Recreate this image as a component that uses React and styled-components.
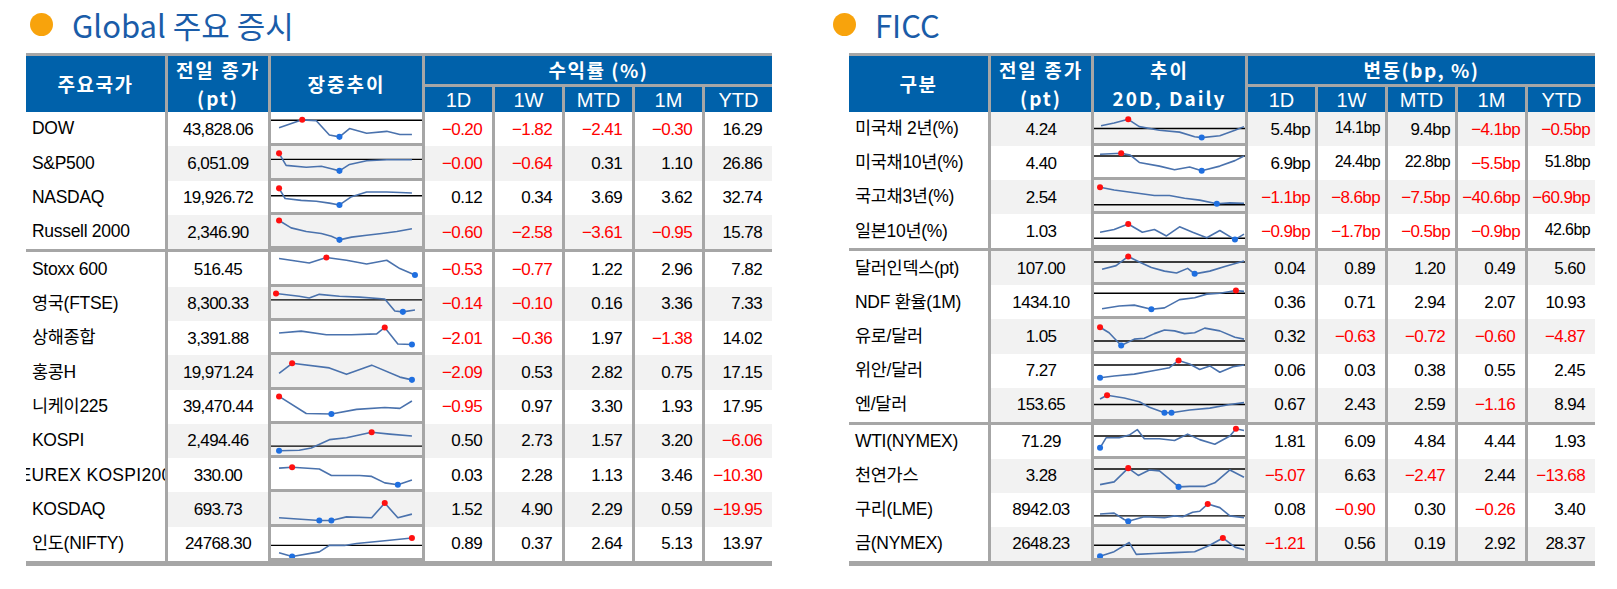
import styled, { createGlobalStyle } from 'styled-components';

const GRID = '139px 100px 151px repeat(5, 67px)';
const LINE = '#a6a6a6';
const HEAD = '#0061aa';
const STRIPE = '#f2f2f2';

const equities = [
  [
    { name: 'DOW', close: '43,828.06', base: 9, pts: [[8,17],[31,8.5],[45,9.5],[58,25],[68,27],[78,18],[95,23],[115,21],[128,24.5],[140,24.5]], ret: ['−0.20', '−1.82', '−2.41', '−0.30', '16.29'] },
    { name: 'S&P500', close: '6,051.09', base: 14.5, pts: [[8,8],[15,21],[35,23],[50,22],[61,25],[68,27],[78,20],[95,16],[115,15],[140,15]], ret: ['−0.00', '−0.64', '0.31', '1.10', '26.86'] },
    { name: 'NASDAQ', close: '19,926.72', base: 16, pts: [[8,8],[14,19],[30,21],[45,22],[58,24],[68,26],[80,17],[95,12],[115,12],[128,12.5],[140,13]], ret: ['0.12', '0.34', '3.69', '3.62', '32.74'] },
    { name: 'Russell 2000', close: '2,346.90', pts: [[8,6],[20,14],[35,18],[50,20],[60,23],[68,27],[80,24],[95,22],[110,20],[125,18],[140,15]], ret: ['−0.60', '−2.58', '−3.61', '−0.95', '15.78'] },
  ],
  [
    { name: 'Stoxx 600', close: '516.45', pts: [[8,7],[38,12],[55,6],[75,9],[95,13],[115,9],[128,18],[143,25]], ret: ['−0.53', '−0.77', '1.22', '2.96', '7.82'] },
    { name: '영국(FTSE)', close: '8,300.33', base: 14, pts: [[5,7],[28,10],[38,12],[48,8],[68,10],[88,11],[113,13],[123,26],[131,27],[143,25]], ret: ['−0.14', '−0.10', '0.16', '3.36', '7.33'] },
    { name: '상해종합', close: '3,391.88', pts: [[8,13],[30,11],[55,15],[80,15],[105,14],[113,7],[126,25],[140,25.5]], ret: ['−2.01', '−0.36', '1.97', '−1.38', '14.02'] },
    { name: '홍콩H', close: '19,971.24', pts: [[8,20],[21,9],[58,14],[75,21],[100,11],[128,24],[140,27]], ret: ['−2.09', '0.53', '2.82', '0.75', '17.15'] },
    { name: '니케이225', close: '39,470.44', pts: [[8,7],[35,25.5],[60,26],[85,21],[113,19],[128,20],[140,12]], ret: ['−0.95', '0.97', '3.30', '1.93', '17.95'] },
    { name: 'KOSPI', close: '2,494.46', base: 24, pts: [[8,29],[28,28.5],[40,26],[58,17],[75,15],[100,9],[118,11],[140,13]], ret: ['0.50', '2.73', '1.57', '3.20', '−6.06'] },
    { name: 'EUREX KOSPI200', clip: true, close: '330.00', pts: [[8,11],[21,10],[48,12],[60,19],[88,19],[100,20],[113,27],[126,29],[140,24]], ret: ['0.03', '2.28', '1.13', '3.46', '−10.30'] },
    { name: 'KOSDAQ', close: '693.73', pts: [[8,28],[48,31],[60,31],[75,27],[100,28],[113,12],[126,28],[140,24]], ret: ['1.52', '4.90', '2.29', '0.59', '−19.95'] },
    { name: '인도(NIFTY)', close: '24768.30', base: 20, pts: [[8,28],[21,32],[48,27],[58,20],[73,20],[85,18],[113,15],[140,12]], ret: ['0.89', '0.37', '2.64', '5.13', '13.97'] },
  ],
];

const ficc = [
  [
    { name: '미국채 2년(%)', close: '4.24', bp: true, base: 18, pts: [[7,15],[20,12],[34,8],[45,16],[65,20],[85,22],[100,27],[107,28],[125,26],[140,20],[149,16]], ret: ['5.4bp', '~14.1bp', '9.4bp', '−4.1bp', '−0.5bp'] },
    { name: '미국채10년(%)', close: '4.40', bp: true, base: 11, pts: [[6,9],[27,8],[36,10],[45,18],[65,22],[80,26],[95,23],[107,27],[125,22],[140,16],[149,11]], ret: ['6.9bp', '~24.4bp', '~22.8bp', '−5.5bp', '~51.8bp'] },
    { name: '국고채3년(%)', close: '2.54', bp: true, base: 27, pts: [[6,8],[20,11],[40,14],[60,17],[75,17],[90,20],[105,22],[122,26],[135,25],[149,25.5]], ret: ['−1.1bp', '−8.6bp', '−7.5bp', '−40.6bp', '−60.9bp'] },
    { name: '일본10년(%)', close: '1.03', bp: true, base: 26.5, pts: [[6,20],[20,17],[34,11],[48,20],[60,17],[72,24],[85,14],[98,20],[112,26],[125,18],[140,28],[149,22]], ret: ['−0.9bp', '−1.7bp', '−0.5bp', '−0.9bp', '~42.6bp'] },
  ],
  [
    { name: '달러인덱스(pt)', close: '107.00', base: 12, pts: [[8,20],[22,16],[34,6],[45,12],[57,18],[70,22],[82,24],[93,19],[100,25],[115,22],[130,17],[149,11]], ret: ['0.04', '0.89', '1.20', '0.49', '5.60'] },
    { name: 'NDF 환율(1M)', close: '1434.10', base: 9, pts: [[8,26],[25,23],[40,22],[57,26.5],[70,25],[85,16],[100,14],[112,10],[125,9],[141,6],[149,7]], ret: ['0.36', '0.71', '2.94', '2.07', '10.93'] },
    { name: '유로/달러', close: '1.05', base: 24, pts: [[6,9],[15,15],[27,29],[40,22],[50,21],[60,16],[70,12],[80,13],[90,16],[100,15],[110,10],[125,13],[140,20],[149,22]], ret: ['0.32', '−0.63', '−0.72', '−0.60', '−4.87'] },
    { name: '위안/달러', close: '7.27', base: 12, pts: [[6,26],[20,24],[40,22],[60,18],[75,15],[84,7],[95,11],[105,17],[115,13],[125,20],[138,14],[149,12]], ret: ['0.06', '0.03', '0.38', '0.55', '2.45'] },
    { name: '엔/달러', close: '153.65', base: 18, pts: [[6,12],[13,8],[30,11],[45,15],[55,21],[70,27],[77,27],[95,24],[115,22],[135,18],[149,16]], ret: ['0.67', '2.43', '2.59', '−1.16', '8.94'] },
  ],
  [
    { name: 'WTI(NYMEX)', close: '71.29', base: 12, pts: [[6,25],[12,14],[25,14],[35,11],[43,5],[50,15],[65,15],[80,17],[93,10],[105,16],[120,21],[135,12],[141,4],[149,6]], ret: ['1.81', '6.09', '4.84', '4.44', '1.93'] },
    { name: '천연가스', close: '3.28', base: 11, pts: [[6,28],[20,25],[34,10],[44,18],[55,12],[65,13],[75,22],[84,30.5],[95,30],[110,30],[120,26],[135,12],[149,20]], ret: ['−5.07', '6.63', '−2.47', '2.44', '−13.68'] },
    { name: '구리(LME)', close: '8942.03', base: 25, pts: [[6,23],[20,22],[30,29],[34,31],[50,26],[70,27],[80,25],[88,26],[98,21],[105,20],[113,12],[125,16],[135,25],[149,27]], ret: ['0.08', '−0.90', '0.30', '−0.26', '3.40'] },
    { name: '금(NYMEX)', close: '2648.23', base: 20, pts: [[6,32],[20,27],[35,17],[42,30],[60,29],[80,28],[100,27],[115,20],[128,12],[140,22],[149,25]], ret: ['−1.21', '0.56', '0.19', '2.92', '28.37'] },
  ],
];

const GlobalStyle = createGlobalStyle`
  body {
    margin: 0;
    background: #fff;
  }
`;

const Page = styled.div`
  display: flex;
  gap: 77px;
  padding-left: 26px;
  font-family: "Liberation Sans", "Noto Sans CJK KR", sans-serif;
  color: #000;
`;

const Panel = styled.section`
  width: 746px;
  display: flex;
  flex-direction: column;
`;

const Title = styled.h2`
  margin: 0 0 5px ${(p) => p.$indent}px;
  height: 48px;
  display: flex;
  align-items: center;
  gap: 19px;
  font-family: "Noto Sans CJK KR", sans-serif;
  font-weight: 400;
  font-size: 31px;
  line-height: 1;
  color: #1a5ca8;

  &::before {
    content: '';
    width: 23px;
    height: 23px;
    border-radius: 50%;
    background: #f8a30c;
  }
`;

const Table = styled.div`
  border-top: 3px solid ${LINE};
  border-bottom: 5px solid ${LINE};
`;

const Head = styled.div`
  display: grid;
  grid-template-columns: ${GRID};
  grid-template-rows: 28px 25px;
  gap: 3px;
  background: ${LINE};
`;

const HeadCell = styled.div`
  grid-row: ${(p) => (p.$rows ? `span ${p.$rows}` : 'auto')};
  grid-column: ${(p) => (p.$cols ? `span ${p.$cols}` : 'auto')};
  background: ${HEAD};
  color: #fff;
  display: flex;
  flex-direction: column;
  align-items: center;
  justify-content: center;
  font-family: "Noto Sans CJK KR", sans-serif;
  font-weight: 700;
  font-size: 19px;
  letter-spacing: ${(p) => p.$spacing ?? 1.5}px;
  line-height: 28px;
`;

const SubHead = styled(HeadCell)`
  font-family: "Liberation Sans", sans-serif;
  font-weight: 400;
  font-size: 20px;
  letter-spacing: 0;
  line-height: 1;
`;

const Body = styled.div`
  height: 449px;
  display: flex;
  flex-direction: column;
`;

const Row = styled.div`
  flex: 1 1 0;
  min-height: 0;
  display: grid;
  grid-template-columns: ${GRID};
  grid-template-rows: 100%;
  column-gap: 3px;
  background: ${LINE};
`;

const Divider = styled.div`
  flex: none;
  height: 3px;
  background: ${LINE};
`;

const Cell = styled.div`
  min-width: 0;
  min-height: 0;
  display: flex;
  align-items: center;
  overflow: hidden;
  white-space: nowrap;
  background: ${(p) => (p.$shade ? STRIPE : '#fff')};
  font-size: 17px;
  line-height: 1;
  letter-spacing: -0.6px;
`;

const Name = styled(Cell)`
  background: #fff;
  justify-content: ${(p) => (p.$clip ? 'center' : 'flex-start')};
  padding-left: ${(p) => (p.$clip ? 0 : 6)}px;
  font-size: 17.5px;
  letter-spacing: ${(p) => (p.$clip ? 0.3 : -0.3)}px;
`;

const Close = styled(Cell)`
  justify-content: center;
`;

const ChartCell = styled(Cell)`
  position: relative;
  border-bottom: 3px solid ${LINE};
`;

const SparkSvg = styled.svg`
  position: absolute;
  inset: 0;
  width: 100%;
  height: 100%;
  display: block;
`;

const Value = styled(Cell)`
  justify-content: flex-end;
  padding-right: ${(p) => (p.$tight ? 5 : 10)}px;
  color: ${(p) => (p.$neg ? '#ff0000' : '#000')};
  font-size: ${(p) => (p.$small ? 16 : 17)}px;
  padding-bottom: ${(p) => (p.$small ? 3 : 0)}px;
`;

function Spark({ pts, base }) {
  const ys = pts.map((p) => p[1]);
  const top = Math.min(...ys);
  const bottom = Math.max(...ys);
  return (
    <SparkSvg viewBox="0 0 150 34" preserveAspectRatio="none">
      {base != null && (
        <line x1="0" x2="150" y1={base} y2={base} stroke="#000" strokeWidth="1.4" vectorEffect="non-scaling-stroke" />
      )}
      <polyline
        points={pts.map((p) => p.join(',')).join(' ')}
        fill="none"
        stroke="#4a72ad"
        strokeWidth="1.6"
        strokeLinejoin="round"
        vectorEffect="non-scaling-stroke"
      />
      {pts.filter((p) => p[1] === top).map((p) => (
        <ellipse key={`r${p[0]}`} cx={p[0]} cy={p[1]} rx="3" ry="3.3" fill="#ff1010" />
      ))}
      {pts.filter((p) => p[1] === bottom).map((p) => (
        <ellipse key={`b${p[0]}`} cx={p[0]} cy={p[1]} rx="3" ry="3.3" fill="#1f6fe0" />
      ))}
    </SparkSvg>
  );
}

function DataRow({ row, shade }) {
  return (
    <Row>
      <Name $clip={row.clip}>{row.name}</Name>
      <Close $shade={shade}>{row.close}</Close>
      <ChartCell $shade={shade}>
        <Spark pts={row.pts} base={row.base} />
      </ChartCell>
      {row.ret.map((v, i) => {
        const small = v.startsWith('~');
        const text = small ? v.slice(1) : v;
        return (
          <Value key={i} $shade={shade} $neg={text.startsWith('−')} $small={small} $tight={row.bp}>
            {text}
          </Value>
        );
      })}
    </Row>
  );
}

function DataTable({ head, groups, firstShaded }) {
  let n = 0;
  return (
    <Table>
      {head}
      <Body>
        {groups.map((rows, g) => [
          g > 0 && <Divider key={`d${g}`} />,
          ...rows.map((row) => {
            const shade = (n++ % 2 === 0) === firstShaded;
            return <DataRow key={row.name} row={row} shade={shade} />;
          }),
        ])}
      </Body>
    </Table>
  );
}

const periods = ['1D', '1W', 'MTD', '1M', 'YTD'];

function Header({ first, trend, group }) {
  return (
    <Head>
      <HeadCell $rows={2}>{first}</HeadCell>
      <HeadCell $rows={2} $spacing={2}>
        <span>전일 종가</span>
        <span>(pt)</span>
      </HeadCell>
      <HeadCell $rows={2} $spacing={2}>
        {trend}
      </HeadCell>
      <HeadCell $cols={5}>{group}</HeadCell>
      {periods.map((p) => (
        <SubHead key={p}>{p}</SubHead>
      ))}
    </Head>
  );
}

export default function App() {
  return (
    <>
      <GlobalStyle />
      <Page>
        <Panel>
          <Title $indent={4}>Global 주요 증시</Title>
          <DataTable
            head={<Header first="주요국가" trend="장중추이" group="수익률 (%)" />}
            groups={equities}
            firstShaded={false}
          />
        </Panel>
        <Panel>
          <Title $indent={-16}>FICC</Title>
          <DataTable
            head={
              <Header
                first="구분"
                trend={
                  <>
                    <span>추이</span>
                    <span>20D, Daily</span>
                  </>
                }
                group="변동(bp, %)"
              />
            }
            groups={ficc}
            firstShaded
          />
        </Panel>
      </Page>
    </>
  );
}
